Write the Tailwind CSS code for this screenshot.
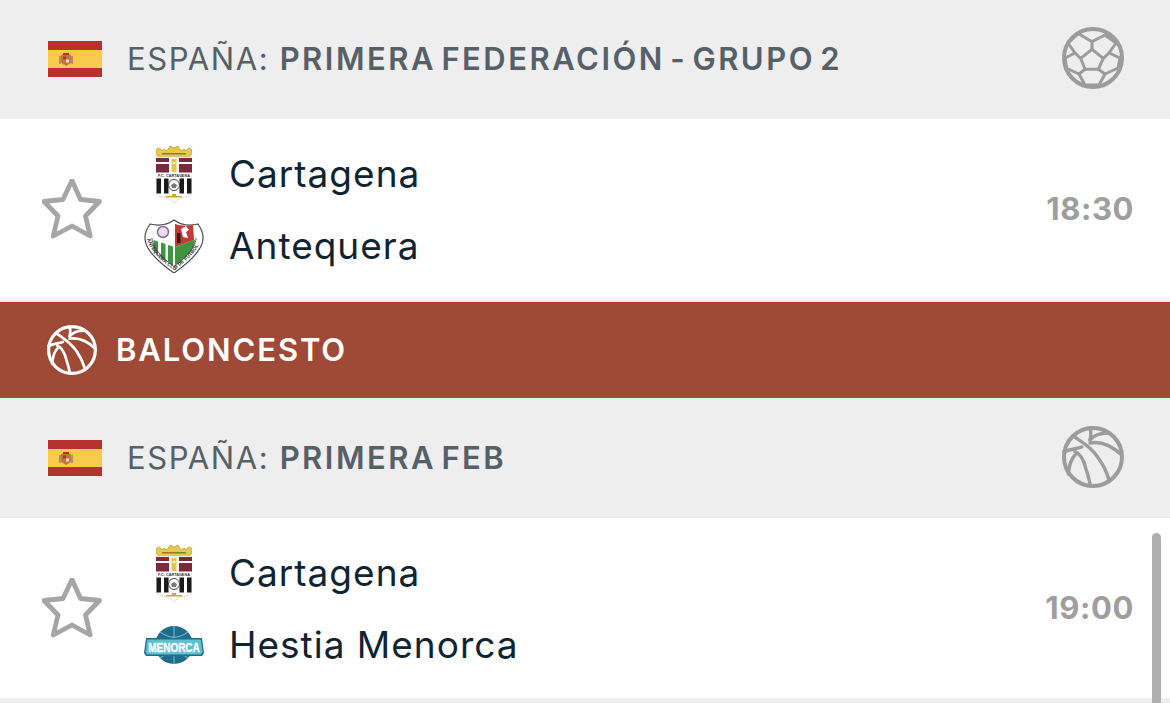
<!DOCTYPE html>
<html lang="es">

<head>
    <meta charset="UTF-8">
    <meta name="viewport" content="width=device-width, initial-scale=1.0">
    <script src="https://cdn.jsdelivr.net/npm/@tailwindcss/browser@4"></script>
    <title>Partidos</title>
</head>

<body class="bg-white font-['Inter',sans-serif]">
    <!-- shared icons -->
    <svg class="absolute w-0 h-0" aria-hidden="true">
        <symbol id="flag" viewBox="0 0 54 36">
            <rect width="54" height="36" fill="#b5332c" />
            <rect y="9" width="54" height="18" fill="#f8cb4e" />
            <path d="M14 13.500h8l1.500 2v6l-5.500 3.500-5.500-3.500v-6z" fill="#c4753c" />
            <rect x="11" y="15" width="1.800" height="8" fill="#b98a66" />
            <rect x="23.200" y="15" width="1.800" height="8" fill="#b98a66" />
            <rect x="15" y="12" width="6" height="2" fill="#b5332c" />
            <rect x="15" y="15.500" width="3" height="3" fill="#b5332c" />
            <rect x="18" y="18.500" width="3" height="3" fill="#e9e2cf" />
        </symbol>
        <symbol id="star" viewBox="0 0 60 60">
            <path d="M30 1.500l8.500 19 19 2-14 14.500 4.700 20-18.200-10-18.700 10 4.700-20-14-14.500 19-2z" fill="none"
                stroke="currentColor" stroke-width="4.800" stroke-linejoin="round" />
        </symbol>
        <symbol id="football" viewBox="0 0 62 62">
            <g fill="none" stroke="currentColor" stroke-linejoin="round" stroke-linecap="round">
                <circle cx="31" cy="31" r="29" stroke-width="4" />
                <g stroke-width="3">
                    <path d="M30 22.300l11.300 9-5 11H23l-4.300-11z" />
                    <path d="M30 22.300v-7.600M16.300 6.500L30 14.700 43 8M18.700 31.300L13 26M41.300 31.300L47 26" />
                    <path d="M16.300 6.500L6 16l7 10-10 5M43 8l11 8-7 10 11 5" />
                    <path d="M3 31l1.700 10.300L17 47l6-4.700M58 31l-2 10-13 6-6.700-4.700" />
                    <path d="M17 47l6 11h14l6-11" />
                </g>
            </g>
        </symbol>
        <symbol id="basket" viewBox="0 0 62 62">
            <g fill="none" stroke="currentColor" stroke-linecap="round">
                <circle cx="31" cy="31" r="29" stroke-width="4" />
                <g stroke-width="3.400">
                    <path d="M11.300 10C21 17 30 22 37 33c5 7 8 14 10 21" />
                    <path d="M28 2c1.200 4 1 8 0 12" />
                    <path d="M28 14C32 9 37 7 46 7" />
                    <path d="M28 17C39 15 50 20 59.700 29" />
                    <path d="M2 26C8 23 14 23 19.700 21" />
                    <path d="M13 25.700C19 28 22 35 24 43c2 6 3.500 12 4.500 17" />
                    <path d="M13 29C9 33 7 41 6.300 48" />
                </g>
            </g>
        </symbol>
    </svg>

    <div class="relative h-[703px] w-[1170px] overflow-hidden">
        <!-- league header -->
        <div class="flex h-[119px] items-center bg-[#eeeeee] pb-px pl-12 pr-[46px]">
            <svg class="mr-[25px] h-9 w-[54px]"><use href="#flag" /></svg>
            <p class="flex-1 text-[31px] tracking-[1.6px] text-[#566069]">ESPAÑA: <span class="font-semibold tracking-[2.5px] [word-spacing:-5px]">PRIMERA FEDERACIÓN - GRUPO 2</span></p>
            <svg class="-mt-[2px] h-[62px] w-[62px] text-[#9c9c9c]"><use href="#football" /></svg>
        </div>

        <!-- match row -->
        <div class="flex h-[179px] items-center bg-white pl-[42px] pr-9">
            <svg class="h-[60px] w-[60px] text-[#a6a6a6]"><use href="#star" /></svg>
            <div class="ml-[42px] flex flex-1 flex-col gap-[17px] pt-[2px]">
                <div class="flex h-[55px] items-center">
                    <div class="flex w-[60px] justify-center">
                        <svg class="h-[58px] w-9 shrink-0" viewBox="0 0 36 58">
                            <path d="M0 5c2-3 5-2 6 1l2-2 3 2 3-5 4 2 4-2 3 5 3-2 2 2c1-3 4-4 6-1 1 3-1 6-3 7l-3 2H6l-3-2C1 11-1 8 0 5z" fill="#e8c74c" stroke="#a68c2a" stroke-width=".6" />
                            <rect x="6" y="8" width="24" height="1.500" fill="#8f7a2a" />
                            <path d="M0 12h36v35c0 3-3 4-7 5-4 1-8 2-11 6-3-4-7-5-11-6-4-1-7-2-7-5z" fill="#fff" stroke="#c8c8c8" stroke-width=".6" />
                            <path d="M0 13h13v4H0zM23 13h13v4H23zM0 19h13v8.500H0zM23 19h13v8.500H23z" fill="#7b2a3c" />
                            <rect x="15.500" y="14" width="5" height="13" fill="#e6c34a" />
                            <rect x="16.800" y="17" width="2.400" height="2" fill="#fff" />
                            <text x="18" y="32" text-anchor="middle" font-family="Liberation Sans, sans-serif" font-size="3.800" font-weight="700" fill="#333">F.C. CARTAGENA</text>
                            <g fill="#1b1b1b">
                                <rect x="0.500" y="33.500" width="4.500" height="15" />
                                <rect x="8" y="33.500" width="4.500" height="15" />
                                <rect x="23.500" y="33.500" width="4.500" height="15" />
                                <rect x="31" y="33.500" width="4.500" height="15" />
                            </g>
                            <circle cx="18" cy="40" r="5.500" fill="#fff" stroke="#444" stroke-width="1" />
                            <path d="M15 40l3-2 3 2-1 3h-4z" fill="#777" />
                            <rect x="10" y="51" width="16" height="1.500" fill="#c9ab2e" />
                            <rect x="16" y="49" width="4" height="2.500" fill="#c9ab2e" />
                        </svg>
                    </div>
                    <span class="ml-[25px] text-[37px] tracking-[1px] text-[#0f2330]">Cartagena</span>
                </div>
                <div class="flex h-[55px] items-center">
                    <div class="flex w-[60px] justify-center">
                        <svg class="h-[54px] w-[60px]" viewBox="0 0 60 54">
                            <path d="M6 5c8 2 17 1 24-4 7 5 16 6 24 4 2 3 5 8 5 13 0 4-1 8-3 11-5 9-16 18-26 25C20 47 9 38 4 29 2 26 1 22 1 18 1 13 4 8 6 5z" fill="#fff" stroke="#4a4a4a" stroke-width="1.200" />
                            <path d="M31 5c6 2 12 2 18 1l1 15-19 7z" fill="#c23a35" />
                            <path d="M37 10l5-3 3 4-3 2 2 6-5-1z" fill="#fff" />
                            <path d="M33 14h3.500v10H33z" fill="#2b1f1f" />
                            <circle cx="19" cy="13" r="5.500" fill="#e6dfe8" stroke="#8a6a9a" stroke-width="1.500" />
                            <g fill="#3f9440">
                                <path d="M9.500 21l4.500 1.500v14l-4.500-5z" />
                                <path d="M17 23.500l4.500 1.500v17L17 39z" />
                                <path d="M24 26l5 1.500V47l-5-4.500z" />
                                <path d="M31 28l20-7.500c0 4-1 7-3 10-3 5-10 11-17 16z" />
                            </g>
                            <path d="M8 19c0 3 1 6 3 9 4 7 11 14 19 19.500 8-5.500 15-12.500 19-19.500 2-3 3-6 3-9" fill="none" stroke="#4a4a4a" stroke-width=".8" />
                            <path id="antequera-rim" d="M3 20c1 3 2 6 4 9 5 8 13 15 23 22 10-7 18-14 23-22 2-3 3-6 4-9" fill="none" />
                            <text font-family="Liberation Sans, sans-serif" font-size="5" font-weight="700" fill="#333"><textPath href="#antequera-rim">ANTEQUERA CLUB DE FUTBOL</textPath></text>
                        </svg>
                    </div>
                    <span class="ml-[25px] text-[37px] tracking-[1px] text-[#0f2330]">Antequera</span>
                </div>
            </div>
            <span class="pt-px text-[31px] font-bold tracking-[0.6px] text-[#9e9e9e]">18:30</span>
        </div>

        <div class="h-1 bg-[#f2f2f2]"></div>

        <!-- sport banner -->
        <div class="flex h-[96px] items-center gap-[19px] bg-[#9e4a36] pl-[47px]">
            <svg class="h-[50px] w-[50px] text-white"><use href="#basket" /></svg>
            <h2 class="text-[31px] font-semibold tracking-[1.9px] text-white">BALONCESTO</h2>
        </div>

        <!-- league header -->
        <div class="flex h-[120px] items-center bg-[#eeeeee] pl-12 pr-[46px]">
            <svg class="mr-[25px] h-9 w-[54px]"><use href="#flag" /></svg>
            <p class="flex-1 text-[31px] tracking-[1.6px] text-[#566069]">ESPAÑA: <span class="font-semibold tracking-[2.5px] [word-spacing:-5px]">PRIMERA FEB</span></p>
            <svg class="-mt-[2px] h-[62px] w-[62px] text-[#9c9c9c]"><use href="#basket" /></svg>
        </div>

        <!-- match row -->
        <div class="flex h-[180px] items-center bg-white pl-[42px] pr-9">
            <svg class="h-[60px] w-[60px] text-[#a6a6a6]"><use href="#star" /></svg>
            <div class="ml-[42px] flex flex-1 flex-col gap-[17px] pt-[2px]">
                <div class="flex h-[55px] items-center">
                    <div class="flex w-[60px] justify-center">
                        <svg class="h-[58px] w-9 shrink-0" viewBox="0 0 36 58">
                            <path d="M0 5c2-3 5-2 6 1l2-2 3 2 3-5 4 2 4-2 3 5 3-2 2 2c1-3 4-4 6-1 1 3-1 6-3 7l-3 2H6l-3-2C1 11-1 8 0 5z" fill="#e8c74c" stroke="#a68c2a" stroke-width=".6" />
                            <rect x="6" y="8" width="24" height="1.500" fill="#8f7a2a" />
                            <path d="M0 12h36v35c0 3-3 4-7 5-4 1-8 2-11 6-3-4-7-5-11-6-4-1-7-2-7-5z" fill="#fff" stroke="#c8c8c8" stroke-width=".6" />
                            <path d="M0 13h13v4H0zM23 13h13v4H23zM0 19h13v8.500H0zM23 19h13v8.500H23z" fill="#7b2a3c" />
                            <rect x="15.500" y="14" width="5" height="13" fill="#e6c34a" />
                            <rect x="16.800" y="17" width="2.400" height="2" fill="#fff" />
                            <text x="18" y="32" text-anchor="middle" font-family="Liberation Sans, sans-serif" font-size="3.800" font-weight="700" fill="#333">F.C. CARTAGENA</text>
                            <g fill="#1b1b1b">
                                <rect x="0.500" y="33.500" width="4.500" height="15" />
                                <rect x="8" y="33.500" width="4.500" height="15" />
                                <rect x="23.500" y="33.500" width="4.500" height="15" />
                                <rect x="31" y="33.500" width="4.500" height="15" />
                            </g>
                            <circle cx="18" cy="40" r="5.500" fill="#fff" stroke="#444" stroke-width="1" />
                            <path d="M15 40l3-2 3 2-1 3h-4z" fill="#777" />
                            <rect x="10" y="51" width="16" height="1.500" fill="#c9ab2e" />
                            <rect x="16" y="49" width="4" height="2.500" fill="#c9ab2e" />
                        </svg>
                    </div>
                    <span class="ml-[25px] text-[37px] tracking-[1px] text-[#0f2330]">Cartagena</span>
                </div>
                <div class="flex h-[55px] items-center">
                    <div class="flex w-[60px] justify-center">
                        <svg class="h-[38px] w-[60px]" viewBox="0 0 60 38">
                            <circle cx="30" cy="19" r="19" fill="#1f6d8a" />
                            <path d="M30 0v38M11 19h38M16 6c10 7 18 7 28 0M16 32c10-7 18-7 28 0" fill="none" stroke="#7cc4d6" stroke-width="1" />
                            <path d="M2 12h56l2 15-2 3H2l-2-3z" fill="#1f6d8a" />
                            <path d="M3 13.500h54l1.500 12.500-1.500 2.500H3l-1.500-2.500z" fill="#5cc0d0" />
                            <text transform="translate(30 26) scale(1 1.250)" text-anchor="middle" font-family="Liberation Sans, sans-serif" font-size="10" font-weight="700" fill="#fff" stroke="#fff" stroke-width=".3">MENORCA</text>
                        </svg>
                    </div>
                    <span class="ml-[25px] text-[37px] tracking-[1px] text-[#0f2330]">Hestia Menorca</span>
                </div>
            </div>
            <span class="text-[31px] font-bold tracking-[0.6px] text-[#9e9e9e]">19:00</span>
        </div>

        <div class="h-[5px] bg-[#eeeeee]"></div>

        <!-- scrollbar -->
        <div class="absolute left-[1152px] top-[533px] h-[170px] w-[9px] rounded-t-full bg-[#adadad]"></div>
    </div>
</body>

</html>
